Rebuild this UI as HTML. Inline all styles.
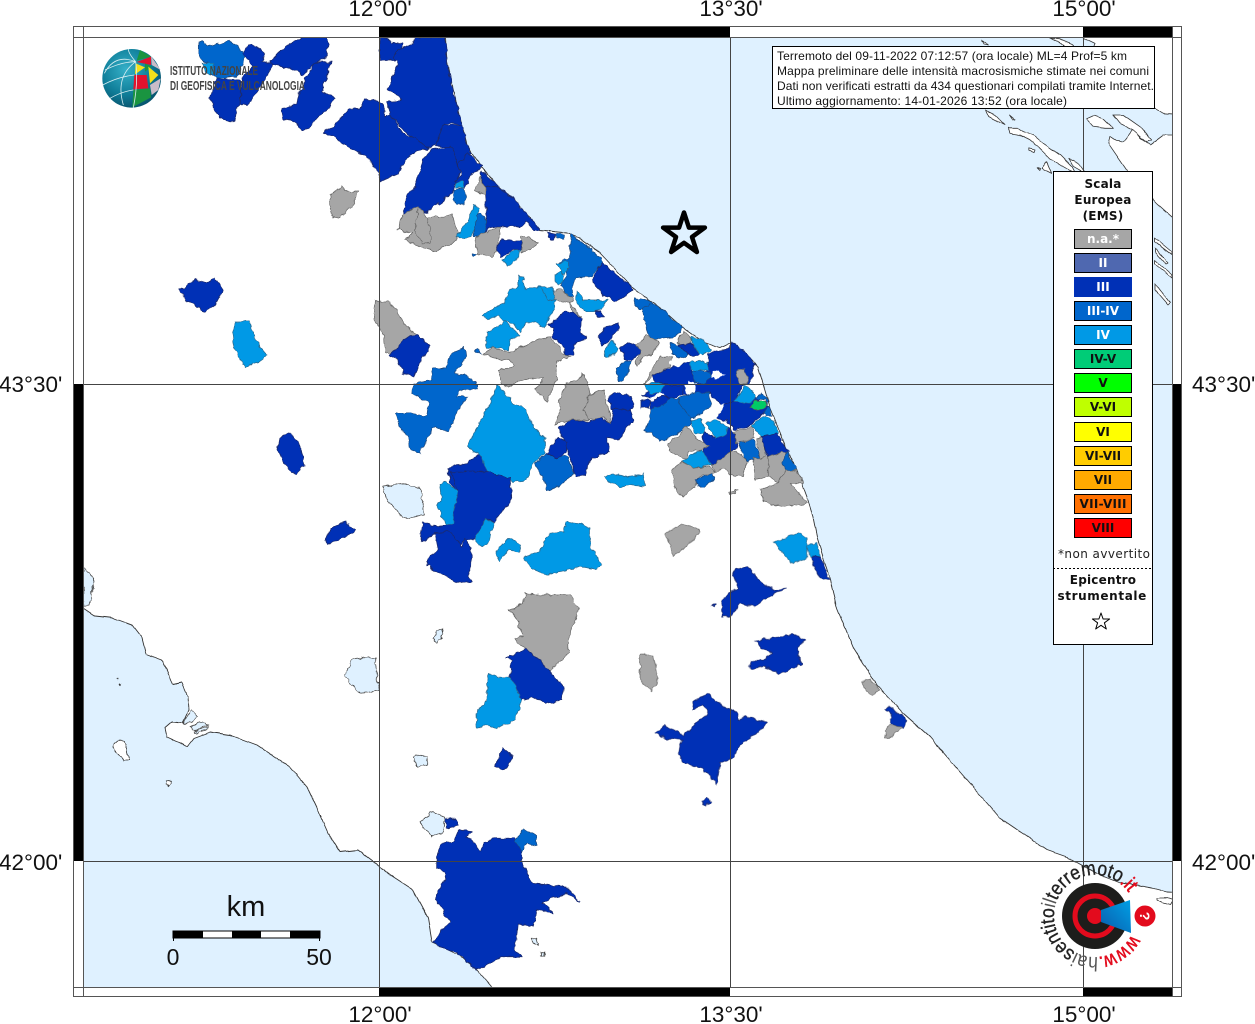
<!DOCTYPE html>
<html><head><meta charset="utf-8"><title>Mappa intensità</title>
<style>
html,body{margin:0;padding:0;background:#fff}
svg{display:block}
polygon,path.v{vector-effect:non-scaling-stroke;stroke-linejoin:round}
.a{fill:#0030b6;stroke:#1a2a70;stroke-width:.8}
.b{fill:#0066cc;stroke:#1d4a80;stroke-width:.7}
.c{fill:#0099e6;stroke:#2a6a90;stroke-width:.7}
.g{fill:#a6a6a6;stroke:#666;stroke-width:.7}
.d{fill:#00cc66;stroke:#555;stroke-width:.7}
.l{fill:#dff1ff;stroke:#444;stroke-width:.8}
.i{fill:#fff;stroke:#333;stroke-width:.8}
.w{fill:#fff}
.t{font-family:"Liberation Sans",sans-serif;fill:#111}
.dj{font-family:"DejaVu Sans",sans-serif;font-weight:bold;font-size:12px;fill:#111;text-anchor:middle;letter-spacing:.2px}
.sw{stroke:#000;stroke-width:1}
.st{font-family:"DejaVu Sans",sans-serif;font-weight:bold;font-size:12px;text-anchor:middle}
</style></head><body>
<svg width="1255" height="1024" viewBox="0 0 1255 1024" xmlns="http://www.w3.org/2000/svg">
<defs>
<radialGradient id="sph" cx="40%" cy="35%" r="70%"><stop offset="0" stop-color="#35b0c8"/><stop offset=".6" stop-color="#0f7d98"/><stop offset="1" stop-color="#07506a"/></radialGradient>
<linearGradient id="cone" x1="0" x2="1" y1="1" y2="0"><stop offset="0" stop-color="#0a5cab"/><stop offset="1" stop-color="#00a0e6"/></linearGradient>
<clipPath id="mapc"><rect x="83" y="37" width="1089" height="950"/></clipPath>
<path id="circ" d="M1131.5 934.6A41 41 0 1 1 1128.6 892.5"/>
<filter id="jag" filterUnits="userSpaceOnUse" x="0" y="0" width="1255" height="1024" color-interpolation-filters="sRGB">
<feTurbulence type="fractalNoise" baseFrequency=".16" numOctaves="2" seed="4" result="n"/>
<feDisplacementMap in="SourceGraphic" in2="n" scale="5" xChannelSelector="R" yChannelSelector="G"/>
</filter>
<filter id="jag2" filterUnits="userSpaceOnUse" x="0" y="0" width="1255" height="1024" color-interpolation-filters="sRGB">
<feTurbulence type="fractalNoise" baseFrequency=".09" numOctaves="2" seed="9" result="n"/>
<feDisplacementMap in="SourceGraphic" in2="n" scale="2.5" xChannelSelector="R" yChannelSelector="G"/>
</filter>
</defs>
<rect width="1255" height="1024" fill="#fff"/>
<g clip-path="url(#mapc)">
<g filter="url(#jag2)">
<!-- seas -->
<polygon fill="#dff1ff" stroke="#333" stroke-width=".9" points="70,608 83,608 95,616 113,618 132,625 142,638 146,654 162,660 167,670 173,685 182,683 188,697 189,710 183,723 172,722 165,728 167,737 178,742 187,747 194,738 210,732 230,735 257,745 290,767 307,787 317,808 328,833 340,852 358,850 375,863 390,875 413,890 428,918 432,942 460,955 477,970 491,986 495,995 70,995"/>
<polygon fill="#dff1ff" stroke="#333" stroke-width=".9" points="445,30 447,62 454,93 462,125 467,145 472,153 482,167 498,187 513,198 540,230 567,233 580,238 600,253 633,288 653,303 665,312 683,328 703,342 720,348 730,343 747,355 758,367 762,380 770,407 787,450 797,470 807,497 813,517 817,537 830,580 837,608 853,647 877,685 903,713 930,737 960,772 1000,818 1047,850 1067,857 1087,868 1100,875 1120,883 1137,885 1152,888 1167,892 1185,893 1185,30"/>
<!-- Croatia -->
<g transform="translate(960 30) scale(.33333)">
<polygon class="i" points="368,-30 680,-30 680,255 610,250 585,235 540,225 500,210 368,160 405,40 368,22"/>
<polygon class="i" points="680,315 610,315 570,345 540,320 520,295 505,315 490,335 465,330 450,320 445,340 500,420 590,520 680,600"/>
<polygon class="i" points="460,255 490,255 540,290 575,330 560,335 520,300 480,280"/>
<polygon class="i" points="378,265 400,255 430,265 460,295 435,295 400,290"/>
<polygon class="i" points="75,240 105,255 135,285 115,275 85,260"/>
<polygon class="i" points="150,255 165,268 160,270"/>
<polygon class="i" points="145,295 175,295 190,305 220,315 250,340 300,375 335,410 345,430 310,410 270,385 235,350 210,330 180,315 150,310"/>
<polygon class="i" points="260,395 275,430 245,415"/>
<polygon class="i" points="325,385 355,400 375,430 340,410"/>
<polygon class="i" points="66,30 85,45 72,42"/>
<polygon class="i" points="270,24 300,40 360,72 340,45 300,28"/>
<polygon class="i" points="205,355 225,360 222,368 205,362"/>
<polygon class="i" points="230,412 240,415 238,420"/>
</g>
<polygon class="i" points="1155,238 1172,252 1172,255 1155,242"/>
<polygon class="i" points="1155,248 1168,263 1166,264 1155,252"/>
<polygon class="i" points="1155,260 1172,275 1172,278 1155,264"/>
<polygon class="i" points="1155,283 1170,303 1168,305 1155,290"/>
<!-- bottom right island -->
<polygon class="i" points="1157,898 1167,898 1173,900 1170,905 1163,903 1157,900"/>
</g>
<g filter="url(#jag)">
<!-- Lake/islands West -->
<g transform="translate(70 560) scale(.33333)">
<polygon class="l" points="40,25 65,45 72,65 60,135 40,137"/>
<polygon class="l" points="825,350 845,300 880,290 915,295 925,390 870,400 845,375"/>
<polygon class="l" points="1050,790 1080,755 1125,770 1120,815 1085,830"/>
<polygon class="l" points="1090,235 1100,210 1120,205 1115,235 1100,250"/>
<polygon class="l" points="1030,590 1040,585 1070,590 1070,615 1040,620"/>
<polygon class="l" points="1385,1135 1400,1135 1405,1155 1390,1150"/>
<polygon class="l" points="1415,1175 1423,1175 1421,1190 1414,1188"/>
<polygon class="i" points="128,560 145,535 165,545 178,600 160,600 140,575"/>
<polygon class="i" points="290,660 305,665 295,680 288,670"/>
<polygon class="l" points="338,490 365,448 385,470 362,490"/>
<polygon class="l" points="362,500 390,487 415,495 370,510"/>
<polygon class="l" points="372,512 415,500 410,510 375,518"/>
<polygon class="i" points="138,355 142,355 142,359"/>
<polygon class="i" points="150,370 154,372 153,377"/>
</g>
<!-- North polygons -->
<g transform="translate(70 20) scale(.33333)">
<polygon class="a" points="440,175 510,180 515,205 510,250 500,270 495,300 480,305 450,295 435,265 420,235"/>
<polygon class="b" points="385,70 398,65 412,78 440,72 480,65 510,85 527,100 520,130 500,170 440,175 425,165 420,130 395,125 385,100"/>
<polygon class="c" points="395,130 430,130 430,160 420,165 405,155"/>
<polygon class="a" points="520,100 535,75 560,78 585,100 575,125 610,130 590,170 560,220 530,255 512,250 515,210 520,170 550,140"/>
<polygon class="a" points="600,125 650,75 710,48 770,48 775,80 765,115 735,130 700,165 660,145 610,135"/>
<polygon class="a" points="755,125 785,125 770,170 755,215 795,235 780,260 745,290 715,325 695,330 675,305 640,295 635,270 680,250 690,215 710,170 735,130"/>
<polygon class="a" points="760,335 790,320 840,265 870,268 885,240 925,240 945,265 945,290 960,285 1000,340 1060,365 1075,385 1040,395 1010,415 990,445 985,460 930,485 925,460 900,420 875,400 860,395 815,370 785,345"/>
<polygon class="g" points="780,525 815,497 830,515 850,515 868,510 845,560 810,595 785,590 780,560"/>
</g>
<g transform="translate(380 30) scale(.33333)">
<polygon class="a" points="0,20 20,22 35,38 70,42 45,90 0,90"/>
<polygon class="a" points="55,60 100,40 105,20 195,20 200,95 222,190 245,285 210,280 190,285 165,345 150,355 120,335 75,305 30,255 20,215 65,210 50,190 20,180 50,115 50,90 40,85"/>
<polygon class="a" points="190,285 245,285 262,345 275,370 232,405 215,350 165,350"/>
<polygon class="a" points="150,360 215,350 232,405 240,430 220,475 215,490 185,515 160,530 145,545 70,555 80,500 105,470 130,390"/>
<polygon class="a" points="232,405 265,370 305,410 290,425 270,440 255,475 225,455 245,435"/>
<polygon class="a" points="305,420 355,470 315,470 300,430"/>
<polygon class="a" points="315,470 355,470 400,505 480,600 465,603 440,575 425,588 380,590 355,590 330,595 310,610 320,570 318,530 315,490"/>
<polygon class="g" points="300,440 315,470 315,495 285,485"/>
<polygon class="b" points="220,478 250,475 258,510 250,525 230,525 220,505"/>
<polygon class="c" points="228,460 250,450 255,473 225,473"/>
<polygon class="g" points="65,555 115,530 140,560 195,560 215,550 225,590 240,610 215,645 190,650 170,665 155,660 125,650 75,630 95,610 55,598"/>
<polygon class="g" points="115,530 140,560 155,620 150,640 125,640 105,605"/>
<polygon class="c" points="228,620 265,575 280,525 295,530 295,560 275,620 250,625 238,625"/>
<polygon class="b" points="290,560 305,550 320,570 310,620 280,620"/>
<polygon class="g" points="285,625 310,610 360,590 355,650 340,680 290,670"/>
<polygon class="a" points="345,650 370,630 425,630 420,660 395,660 365,680"/>
<polygon class="g" points="425,620 445,620 475,640 450,660 422,670"/>
<polygon class="c" points="370,690 390,665 420,660 415,685 385,710"/>
<polygon class="b" points="272,675 288,672 280,682"/>
<polygon class="a" points="500,605 530,610 520,635 505,620"/>
<polygon class="b" points="530,610 555,612 550,628 530,625"/>
</g>
<!-- Central -->
<g transform="translate(370 220) scale(.33333)">
<polygon class="b" points="600,40 660,85 690,115 695,130 665,170 615,175 608,200 610,230 590,225 575,195 590,165 595,130 565,130 600,110"/>
<polygon class="a" points="695,130 790,205 760,230 735,245 700,225 665,180"/>
<polygon class="c" points="560,130 595,125 595,155 580,165 570,150"/>
<polygon class="c" points="555,165 575,155 580,185 565,195 555,185"/>
<polygon class="b" points="790,240 815,235 850,250 835,265 805,270"/>
<polygon class="b" points="815,265 850,250 885,275 940,325 915,350 870,355 845,365 825,310"/>
<polygon class="c" points="620,215 640,240 675,240 710,240 695,270 670,275 640,275 618,245"/>
<polygon class="a" points="675,275 695,275 700,292 685,292"/>
<polygon class="g" points="550,215 565,205 610,235 600,250 635,290 610,290 600,250 570,245 550,235"/>
<polygon class="c" points="335,285 400,250 425,205 445,200 445,165 460,175 465,205 490,205 510,200 535,240 560,240 550,265 525,325 505,310 470,305 450,335 430,310 400,300 385,285 355,300"/>
<polygon class="c" points="510,200 525,200 550,205 555,240 535,240"/>
<polygon class="a" points="555,300 585,275 620,280 635,295 630,340 650,350 610,375 610,405 590,405 575,375 545,350 550,325 535,315"/>
<polygon class="c" points="350,335 385,320 405,300 450,345 420,360 415,395 395,385 370,380 350,385"/>
<polygon class="g" points="15,240 60,245 110,320 145,350 115,350 75,400 45,395 40,345 10,290"/>
<polygon class="a" points="60,405 115,350 145,345 178,380 130,470 100,460 95,435"/>
<polygon class="b" points="80,580 120,580 170,590 175,550 125,520 135,490 185,480 190,445 225,445 245,400 280,385 290,410 250,460 285,465 320,490 320,505 270,510 265,530 295,530 270,560 250,600 235,635 190,620 160,680 150,700 120,690 115,650 85,620"/>
<polygon class="b" points="315,390 325,387 333,403 320,398"/>
<polygon class="g" points="340,400 370,380 415,400 430,390 500,360 540,350 580,400 600,410 560,425 560,480 530,545 495,510 520,475 450,480 415,505 395,490 385,450 435,440 420,420 390,420"/>
<polygon class="a" points="235,745 290,730 330,700 365,755 420,785 425,830 400,870 370,905 250,905 265,820 240,790"/>
<polygon class="c" points="385,495 425,545 470,570 490,620 525,655 525,700 490,730 470,780 430,785 350,755 335,710 290,680 340,590"/>
<polygon class="l" points="40,800 100,790 155,805 160,885 100,895 70,860 45,830"/>
<polygon class="b" points="495,730 530,700 590,710 615,760 570,795 530,815 520,780"/>
<polygon class="a" points="565,625 600,600 660,605 690,590 725,610 730,565 780,565 790,600 770,625 745,660 710,655 720,695 660,715 645,765 620,770 600,715 590,680"/>
<polygon class="a" points="530,700 565,650 590,665 590,700 560,715"/>
<polygon class="g" points="555,615 570,570 565,540 590,490 620,480 640,460 655,495 660,520 640,570 660,600 600,600"/>
<polygon class="g" points="640,570 660,525 700,510 725,610 700,590 660,600"/>
<polygon class="a" points="715,540 735,515 780,530 795,550 780,570 725,565"/>
<polygon class="c" points="705,770 730,760 770,770 820,762 825,800 780,795 750,800 715,785"/>
<polygon class="a" points="685,345 700,325 745,310 745,330 710,370 695,375"/>
<polygon class="c" points="700,395 725,360 745,385 730,405 705,410"/>
<polygon class="a" points="750,385 775,368 810,380 815,395 785,420 765,415"/>
<polygon class="b" points="740,445 770,420 785,425 760,480 745,485"/>
<polygon class="g" points="800,375 830,345 868,370 845,405 820,410 805,440 795,425 815,395"/>
</g>
<!-- South-central -->
<g transform="translate(400 470) scale(.33333)">
<polygon class="a" points="150,5 265,5 330,25 335,85 300,135 285,155 255,145 235,185 225,205 195,210 175,230 140,185 110,190 65,215 60,185 70,155 90,165 125,170 150,160 165,100 175,65"/>
<polygon class="a" points="105,190 145,185 185,230 195,205 215,240 215,290 205,315 215,335 170,340 155,325 100,300 80,285 90,255 115,240"/>
<polygon class="c" points="120,45 135,35 175,65 165,105 160,160 140,165 125,140 110,105 125,85"/>
<polygon class="c" points="225,205 255,145 285,160 270,195 265,220 245,230"/>
<polygon class="c" points="285,245 325,205 360,225 360,245 325,240 300,275"/>
<polygon class="c" points="370,260 420,245 445,190 490,185 500,155 540,160 570,175 570,225 605,285 585,297 540,290 500,300 440,315 395,295"/>
</g>
<!-- Coast dense -->
<g transform="translate(640 320) scale(.33333)">
<polygon class="g" points="130,35 165,60 130,80 110,65"/>
<polygon class="g" points="65,110 100,110 90,140 40,165 10,195 45,130"/>
<polygon class="a" points="40,165 100,140 150,125 155,165 200,155 205,100 270,85 275,65 310,90 345,135 330,190 305,195 285,245 250,260 210,220 170,225 130,225 100,195 45,190"/>
<polygon class="b" points="90,70 115,75 145,105 125,115 95,100"/>
<polygon class="a" points="115,75 155,70 180,105 155,110 145,105"/>
<polygon class="c" points="155,50 190,60 215,90 180,105 160,75"/>
<polygon class="w" points="85,130 110,115 130,115 120,140 95,140"/>
<polygon class="w" points="155,118 185,100 200,118 175,122 158,125"/>
<polygon class="w" points="215,155 235,150 255,165 235,178 215,175"/>
<polygon class="w" points="135,195 150,182 170,190 165,225 140,225"/>
<polygon class="g" points="285,155 315,145 325,190 300,190"/>
<polygon class="c" points="150,125 175,120 200,130 205,150 170,155 150,150"/>
<polygon class="b" points="155,155 205,155 215,170 195,190 165,190"/>
<polygon class="a" points="0,225 15,225 45,190 100,195 130,195 130,225 90,235 70,225 50,240"/>
<polygon class="a" points="0,240 30,240 28,262 0,265"/>
<polygon class="a" points="30,245 70,228 90,235 75,265 35,272"/>
<polygon class="c" points="15,195 40,190 72,195 65,215 30,222"/>
<polygon class="w" points="30,235 60,215 72,225 40,240"/>
<polygon class="a" points="230,295 250,255 285,245 315,195 345,230 385,260 360,290 335,315 285,330 262,305"/>
<polygon class="a" points="190,330 205,345 230,355 262,320 275,330 295,380 275,395 215,435 190,405"/>
<polygon class="c" points="150,305 180,295 195,325 190,340 165,340"/>
<polygon class="c" points="198,310 225,300 262,320 255,345 225,355"/>
<polygon class="b" points="115,235 175,215 205,220 215,255 160,295 150,295 125,265"/>
<polygon class="b" points="35,265 60,260 90,235 115,235 125,265 155,295 150,310 140,325 110,340 60,365 35,340 10,330 30,300"/>
<polygon class="w" points="175,290 215,262 255,250 235,285 230,300 195,305"/>
<polygon class="g" points="85,370 120,345 140,320 165,350 205,380 185,390 150,395 135,420 115,410 85,385"/>
<polygon class="c" points="125,425 155,405 185,390 215,435 160,445"/>
<polygon class="g" points="95,450 125,425 160,445 210,440 225,455 180,470 165,500 130,530 105,510"/>
<polygon class="b" points="165,480 215,460 225,475 195,500 175,500"/>
<polygon class="g" points="215,435 275,395 290,395 320,420 310,470 270,465 255,445 225,455"/>
<polygon class="b" points="295,370 340,355 360,415 320,425"/>
<polygon class="g" points="280,335 335,320 345,350 290,370"/>
<polygon class="g" points="350,355 370,350 380,410 360,415"/>
<polygon class="c" points="335,320 370,287 395,295 415,340 365,350"/>
<polygon class="a" points="365,350 410,340 445,395 385,410"/>
<polygon class="c" points="283,245 315,195 345,225 345,235 330,250"/>
<polygon class="b" points="345,235 365,220 385,240 385,255 378,240"/>
<polygon class="d" points="330,260 345,240 378,245 385,255 350,272"/>
<polygon class="b" points="370,275 385,260 395,285 375,285"/>
<polygon class="g" points="340,415 360,415 385,410 385,470 345,480"/>
<polygon class="g" points="385,410 435,395 440,450 415,488 385,470"/>
<polygon class="b" points="425,430 438,395 470,450 440,455"/>
<polygon class="g" points="360,510 415,488 440,450 470,450 490,490 455,490 500,550 470,555 410,560 370,540"/>
<polygon class="g" points="265,515 295,510 285,520 270,525"/>
</g>
<!-- Lower right group -->
<g transform="translate(640 510) scale(.33333)">
<polygon class="g" points="75,70 125,42 180,62 145,105 100,138 90,105"/>
<polygon class="c" points="402,95 475,70 500,85 500,145 460,160 425,130"/>
<polygon class="c" points="498,110 530,95 540,140 510,140"/>
<polygon class="a" points="515,140 540,140 568,205 540,205 525,180"/>
<polygon class="a" points="280,195 290,175 325,170 365,220 405,240 440,235 390,255 345,290 300,280 270,320 245,320 245,270 265,250 295,235"/>
<polygon class="a" points="215,285 230,285 222,292"/>
<polygon class="a" points="348,390 460,375 500,390 470,415 485,465 415,490 375,470 330,478 335,452 370,450 395,430 365,415"/>
<polygon class="g" points="0,435 40,435 55,505 35,545 10,520 0,510"/>
<polygon class="a" points="45,670 75,645 130,675 180,630 205,610 190,585 155,600 165,570 205,552 265,600 290,605 295,630 315,620 380,635 355,670 310,695 280,740 240,760 230,825 190,775 130,760 115,725 125,690 75,685"/>
<polygon class="a" points="185,875 200,862 215,875 195,888"/>
<polygon class="a" points="733,595 750,588 800,630 790,655 750,640 755,615"/>
<polygon class="g" points="665,515 690,505 720,540 700,555 680,545"/>
<polygon class="g" points="735,660 750,645 785,650 755,682 738,685"/>
</g>
<!-- Lower left group -->
<g transform="translate(70 560) scale(.33333)">
<polygon class="g" points="1320,150 1360,130 1365,100 1440,105 1500,105 1525,145 1495,240 1495,280 1440,335 1370,265 1340,250 1335,235 1360,230 1340,180"/>
<polygon class="a" points="1310,295 1370,265 1440,335 1480,380 1475,420 1425,430 1385,410 1345,425 1320,370 1325,300"/>
<polygon class="c" points="1255,340 1280,350 1320,350 1355,420 1335,480 1280,505 1250,495 1220,505 1218,460 1250,420"/>
<polygon class="a" points="1275,620 1298,565 1330,590 1305,630"/>
<polygon class="a" points="1127,775 1155,775 1165,795 1130,805"/>
<polygon class="a" points="1100,890 1115,850 1150,845 1165,810 1205,815 1190,830 1215,850 1230,875 1245,850 1265,835 1330,835 1355,875 1355,905 1385,970 1490,980 1530,1025 1490,1000 1440,1015 1420,1030 1450,1060 1400,1050 1390,1100 1345,1090 1335,1170 1355,1190 1300,1190 1220,1230 1170,1185 1090,1150 1125,1100 1140,1085 1095,1015 1130,945 1100,925"/>
<polygon class="b" points="1335,845 1360,805 1400,830 1400,860 1370,850 1355,878"/>
</g>
<!-- Isolated -->
<polygon class="a" points="180,290 195,280 205,283 215,278 223,290 215,305 205,312 195,305 185,300"/>
<polygon class="c" points="236,322 250,322 255,340 267,355 258,362 245,366 235,350 232,335"/>
<polygon class="a" points="280,438 290,433 300,445 304,465 295,474 285,465 278,450"/>
<polygon class="a" points="325,540 332,528 345,522 355,530 345,537 335,540 328,545"/>
</g>
</g>
<!-- Grid -->
<g stroke="#444" stroke-width="1" fill="none">
<path d="M379.5 37V987M730.5 37V987M1083.5 37V987M83 384.5H1172M83 861.5H1172"/>
</g>
<!-- Frame -->
<g>
<rect x="73" y="26" width="1109" height="11" fill="#fff"/><rect x="73" y="987" width="1109" height="10" fill="#fff"/>
<rect x="73" y="26" width="10" height="971" fill="#fff"/><rect x="1172" y="26" width="10" height="971" fill="#fff"/>
<rect x="379" y="26" width="351" height="11" fill="#000"/><rect x="1083" y="26" width="89" height="11" fill="#000"/>
<rect x="379" y="987" width="351" height="10" fill="#000"/><rect x="1083" y="987" width="89" height="10" fill="#000"/>
<rect x="73" y="384" width="10" height="477" fill="#000"/><rect x="1172" y="384" width="10" height="477" fill="#000"/>
<rect x="73.5" y="26.5" width="1108" height="970" fill="none" stroke="#555"/>
<path d="M83.5 26V997M1172.5 26V997M73 37.5H1182M73 987.5H1182" fill="none" stroke="#555"/>
</g>
<!-- Labels -->
<g class="t" font-size="22.5" text-anchor="middle">
<text x="380" y="16">12°00'</text><text x="731" y="16">13°30'</text><text x="1084" y="16">15°00'</text>
<text x="380" y="1022">12°00'</text><text x="731" y="1022">13°30'</text><text x="1084" y="1022">15°00'</text>
</g>
<g class="t" font-size="22.5">
<text x="-1" y="392">43°30'</text><text x="-1" y="870">42°00'</text>
<text x="1192" y="392">43°30'</text><text x="1192" y="870">42°00'</text>
</g>
<!-- Star -->
<polygon fill="#dff1ff" stroke="#000" stroke-width="4.5" stroke-miterlimit="10" points="684,212.5 688.9,227.6 704.9,227.6 692,237 696.9,252 684,242.8 671.1,252 676,237 663.1,227.6 679.1,227.6"/>
<!-- Scale -->
<text class="t" x="246" y="916" font-size="29" text-anchor="middle">km</text>
<rect x="173" y="931" width="147" height="7" fill="#fff" stroke="#000"/>
<rect x="173" y="931" width="30" height="7" fill="#000"/><rect x="232" y="931" width="29" height="7" fill="#000"/><rect x="290" y="931" width="30" height="7" fill="#000"/>
<path d="M173.5 931V941M319.5 931V941" stroke="#000"/>
<text class="t" x="173" y="965" font-size="23" text-anchor="middle">0</text>
<text class="t" x="319" y="965" font-size="23" text-anchor="middle">50</text>
<!-- Info box -->
<rect x="772.5" y="46.5" width="382" height="62" fill="#fff" stroke="#000"/>
<g class="t" font-size="12">
<text x="777" y="60" textLength="350">Terremoto del 09-11-2022 07:12:57 (ora locale) ML=4 Prof=5 km</text>
<text x="777" y="75" textLength="372">Mappa preliminare delle intensità macrosismiche stimate nei comuni</text>
<text x="777" y="90" textLength="377">Dati non verificati estratti da 434 questionari compilati tramite Internet.</text>
<text x="777" y="105" textLength="290">Ultimo aggiornamento: 14-01-2026 13:52 (ora locale)</text>
</g>
<!-- Legend -->
<rect x="1053.5" y="171.5" width="99" height="473" fill="#fff" stroke="#000"/>
<text class="dj" x="1103" y="188">Scala</text><text class="dj" x="1103" y="204">Europea</text><text class="dj" x="1103" y="220">(EMS)</text>
<g class="sw">
<rect x="1074.5" y="229.5" width="57" height="19" fill="#a6a6a6"/>
<rect x="1074.5" y="253.5" width="57" height="19" fill="#4f68b0"/>
<rect x="1074" y="277" width="58" height="20" fill="#0030b6" stroke="none"/>
<rect x="1074.5" y="301.5" width="57" height="19" fill="#0066cc"/>
<rect x="1074.5" y="325.5" width="57" height="19" fill="#0099e6"/>
<rect x="1074.5" y="349.5" width="57" height="19" fill="#00cc77"/>
<rect x="1074.5" y="373.5" width="57" height="19" fill="#00ff00"/>
<rect x="1074.5" y="397.5" width="57" height="19" fill="#bfff00"/>
<rect x="1074.5" y="422.5" width="57" height="19" fill="#ffff00"/>
<rect x="1074.5" y="446.5" width="57" height="19" fill="#ffcc00"/>
<rect x="1074.5" y="470.5" width="57" height="19" fill="#ffaa00"/>
<rect x="1074.5" y="494.5" width="57" height="19" fill="#ff7000"/>
<rect x="1074.5" y="518.5" width="57" height="19" fill="#ff0000"/>
</g>
<g class="st" fill="#fff">
<text x="1103" y="243">n.a.*</text><text x="1103" y="267">II</text><text x="1103" y="291">III</text><text x="1103" y="315">III-IV</text><text x="1103" y="339">IV</text>
</g>
<g class="st" fill="#111">
<text x="1103" y="363">IV-V</text><text x="1103" y="387">V</text><text x="1103" y="411">V-VI</text><text x="1103" y="436">VI</text><text x="1103" y="460">VI-VII</text><text x="1103" y="484">VII</text><text x="1103" y="508" textLength="47">VII-VIII</text><text x="1103" y="532">VIII</text>
</g>
<text x="1058" y="558" font-family="'DejaVu Sans',sans-serif" font-size="12" fill="#222" textLength="92">*non avvertito</text>
<path d="M1053 568.5H1151" stroke="#000" stroke-dasharray="2 2"/>
<text class="dj" x="1103" y="584">Epicentro</text><text class="dj" x="1102" y="600" textLength="89">strumentale</text>
<polygon fill="#fff" stroke="#000" stroke-width="1" points="1101,613 1103.1,619 1109.6,619 1104.4,622.8 1106.3,629 1101,625.3 1095.7,629 1097.6,622.8 1092.4,619 1098.9,619"/>
<!-- INGV logo -->
<g transform="translate(95 40) scale(.33333)">
<circle cx="110" cy="115" r="88" fill="url(#sph)"/>
<polygon fill="#1a9440" points="125,62 135,30 168,50"/>
<polygon fill="#e2122d" points="125,66 168,50 168,75 145,70"/>
<polygon fill="#f5e11a" points="122,70 150,82 120,103"/>
<polygon fill="#1a9440" points="150,70 170,80 150,95"/>
<polygon fill="#c9bcc8" points="168,48 197,90 170,75"/>
<polygon fill="#f5e11a" points="160,80 190,105 165,130"/>
<polygon fill="#e2122d" points="118,105 155,105 160,145 115,148"/>
<polygon fill="#c9bcc8" points="165,135 197,115 190,150 170,165"/>
<polygon fill="#1a9440" points="115,150 165,145 168,172 112,202"/>
<g fill="none" stroke="#d8eef2" stroke-width="2.4">
<path d="M122 65Q60 110 85 195M122 65Q130 130 115 203M122 65Q60 40 28 100M122 65Q100 40 100 27M30 90Q80 65 122 65M23 135Q70 110 118 105M45 175Q80 155 115 150"/>
</g>
</g>
<text x="170" y="75" font-family="'Liberation Sans',sans-serif" font-weight="bold" font-size="13" fill="#444" textLength="88" lengthAdjust="spacingAndGlyphs">ISTITUTO NAZIONALE</text>
<text x="170" y="90" font-family="'Liberation Sans',sans-serif" font-weight="bold" font-size="13" fill="#444" textLength="135" lengthAdjust="spacingAndGlyphs">DI GEOFISICA E VULCANOLOGIA</text>
<!-- Hai sentito logo -->
<circle cx="1095" cy="916" r="33" fill="#1d1d1b"/>
<circle cx="1095" cy="916" r="20" fill="none" stroke="#e30b1d" stroke-width="5"/>
<circle cx="1095" cy="916" r="8" fill="#e30b1d"/>
<polygon fill="url(#cone)" points="1101,910 1130,900 1131,933 1101,922"/>
<circle cx="1145" cy="916" r="10.5" fill="#e30b1d"/>
<text x="1145" y="921" transform="rotate(90 1145 916)" font-family="'Liberation Sans',sans-serif" font-weight="bold" font-size="14" fill="#fff" text-anchor="middle">?</text>
<text font-family="'Liberation Sans',sans-serif" font-size="20" fill="#111"><textPath href="#circ" textLength="213" lengthAdjust="spacingAndGlyphs"><tspan fill="#e30b1d" stroke="#e30b1d" stroke-width=".5">www.</tspan><tspan fill="#555">hai</tspan><tspan fill="#222" stroke="#222" stroke-width=".35">sentito</tspan><tspan fill="#555">il</tspan><tspan fill="#222" stroke="#222" stroke-width=".35">terremoto</tspan><tspan fill="#e30b1d" stroke="#e30b1d" stroke-width=".5">.it</tspan></textPath></text>
</svg>
</body></html>
